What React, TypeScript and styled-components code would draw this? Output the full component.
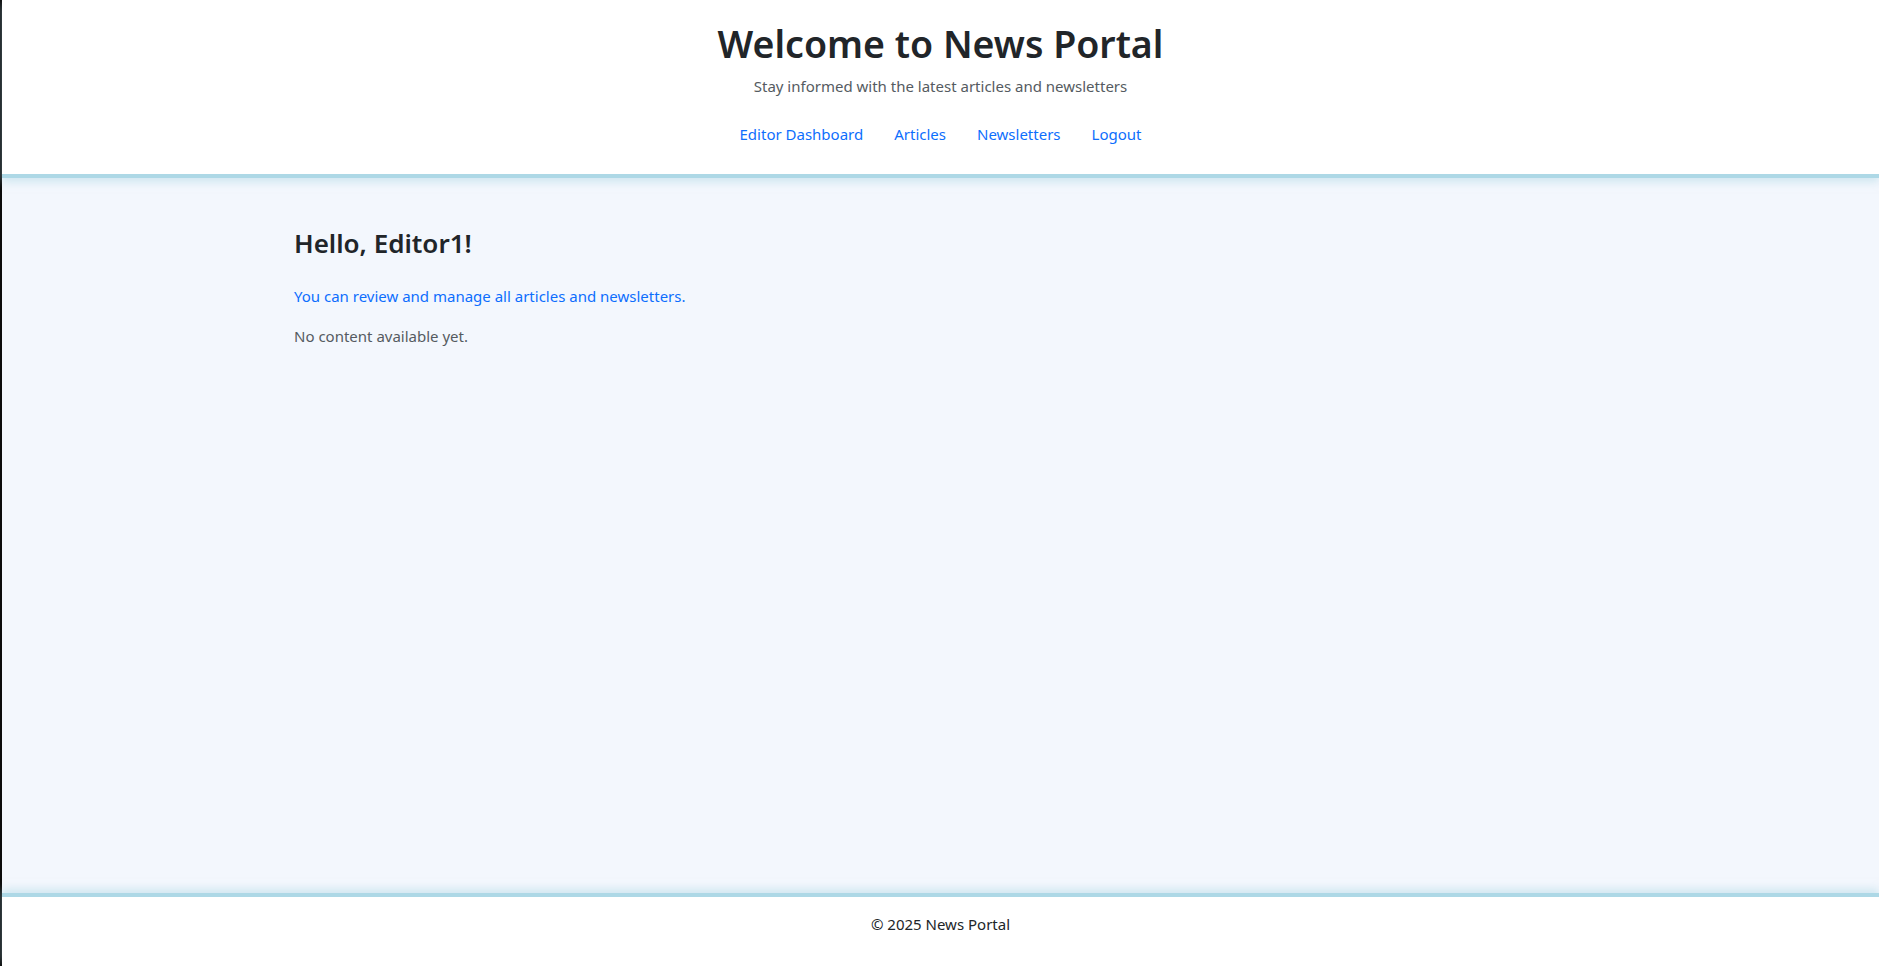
import React from "react";
import styled, { createGlobalStyle } from "styled-components";

const Global = createGlobalStyle`
  html, body { margin: 0; padding: 0; }
  body {
    font-family: "Noto Sans", "Open Sans", Arial, sans-serif;
    font-size: 15px;
    line-height: 24px;
    color: #212529;
    background: #ffffff;
  }
  * { box-sizing: border-box; }
`;

const Page = styled.div`
  min-height: 966px;
  display: flex;
  flex-direction: column;
  border-left: 2px solid #0b0b0b;
`;

const Header = styled.header`
  background: #ffffff;
  text-align: center;
  padding: 21px 0 28px;
  border-bottom: 4px solid #add8e6;
  box-shadow: 0 4px 8px rgba(173, 216, 230, 0.5);
  position: relative;
  z-index: 1;
`;

const Title = styled.h1`
  margin: 0;
  font-size: 37.5px;
  font-weight: 600;
  line-height: 45px;
  color: #212529;
`;

const Subtitle = styled.p`
  margin: 8px 0 0;
  font-size: 15px;
  line-height: 24px;
  color: #555b61;
`;

const Nav = styled.nav`
  display: flex;
  justify-content: center;
  gap: 31px;
  margin-top: 24px;
`;

const NavLink = styled.a`
  color: #0d6efd;
  text-decoration: none;
  font-size: 15px;
  line-height: 24px;
`;

const Main = styled.main`
  flex: 1;
  background: #f3f7fd;
  padding: 50px 0 24px 292px;
`;

const Greeting = styled.h2`
  margin: 0 0 24.5px;
  font-size: 26px;
  font-weight: 600;
  line-height: 31.2px;
  color: #212529;
`;

const Para = styled.p<{ $tone: "link" | "muted" }>`
  margin: 0 0 16px;
  font-size: 15px;
  line-height: 24px;
  color: ${(p) => (p.$tone === "link" ? "#0d6efd" : "#555b61")};
`;

const Footer = styled.footer`
  background: #ffffff;
  text-align: center;
  padding: 15px 0 30px;
  border-top: 4px solid #add8e6;
  box-shadow: 0 -4px 8px rgba(173, 216, 230, 0.5);
  font-size: 15px;
  line-height: 24px;
  color: #212529;
  position: relative;
`;

export default function App() {
  return (
    <>
      <Global />
      <Page>
        <Header>
          <Title>Welcome to News Portal</Title>
          <Subtitle>Stay informed with the latest articles and newsletters</Subtitle>
          <Nav>
            <NavLink href="#">Editor Dashboard</NavLink>
            <NavLink href="#">Articles</NavLink>
            <NavLink href="#">Newsletters</NavLink>
            <NavLink href="#">Logout</NavLink>
          </Nav>
        </Header>
        <Main>
          <Greeting>Hello, Editor1!</Greeting>
          <Para $tone="link">You can review and manage all articles and newsletters.</Para>
          <Para $tone="muted">No content available yet.</Para>
        </Main>
        <Footer>© 2025 News Portal</Footer>
      </Page>
    </>
  );
}
